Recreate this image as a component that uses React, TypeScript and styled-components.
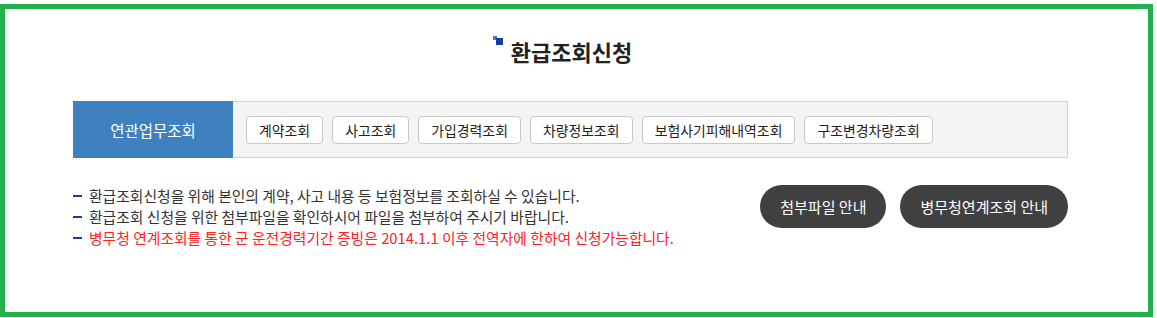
import React from "react";
import styled, { createGlobalStyle } from "styled-components";

const GlobalStyle = createGlobalStyle`
  body {
    margin: 0;
    background: #ffffff;
    font-family: "Noto Sans CJK KR", "Noto Sans", sans-serif;
  }
`;

const Frame = styled.div`
  margin-top: 4px;
  width: 1153px;
  height: 313px;
  box-sizing: border-box;
  border: 5px solid #22b14c;
`;

const Content = styled.div`
  width: 995px;
  margin-left: 68px;
`;

const Title = styled.h2`
  margin: 0;
  padding-top: 27px;
  height: 92px;
  box-sizing: border-box;
  display: flex;
  justify-content: center;
  align-items: flex-start;
  gap: 8px;
  font-size: 22px;
  font-weight: 700;
  color: #222;
  line-height: 30px;
  padding-right: 16px;
`;

const TitleMark = styled.span`
  position: relative;
  width: 10px;
  height: 10px;
  &::before {
    content: "";
    position: absolute;
    left: 0;
    top: 0;
    width: 4px;
    height: 4px;
    background: #3b78d8;
  }
  &::after {
    content: "";
    position: absolute;
    left: 3px;
    top: 2px;
    width: 7px;
    height: 7px;
    background: #103f9c;
  }
`;

const MenuBar = styled.div`
  display: flex;
  height: 57px;
  box-sizing: border-box;
  border: 1px solid #d2d2d2;
  background: #f4f4f4;
`;

const MenuLabel = styled.div`
  width: 160px;
  margin: -1px 0 -1px -1px;
  background: #3f80c0;
  color: #fff;
  font-size: 15.5px;
  display: flex;
  align-items: center;
  justify-content: center;
`;

const MenuList = styled.div`
  display: flex;
  align-items: center;
  gap: 9px;
  padding-left: 13px;
`;

const MenuButton = styled.button`
  height: 28px;
  padding: 0 12px;
  border: 1px solid #c8c8c8;
  border-radius: 4px;
  background: #fff;
  color: #222;
  font-family: inherit;
  font-size: 13.9px;
`;

const InfoRow = styled.div`
  display: flex;
  justify-content: space-between;
  padding-top: 27px;
`;

const Notes = styled.ul`
  margin: 0;
  padding: 0;
  list-style: none;
  font-size: 14.8px;
  line-height: 21px;
`;

const Note = styled.li<{ warn?: boolean }>`
  color: ${(p) => (p.warn ? "#ff2222" : "#333")};
  padding-left: 16px;
  position: relative;
  &::before {
    content: "";
    position: absolute;
    left: 0;
    top: 10px;
    width: 9px;
    height: 2px;
    background: #1c3f94;
  }
`;

const GuideButtons = styled.div`
  display: flex;
  gap: 14px;
`;

const GuideButton = styled.button`
  height: 43px;
  padding: 0 20px;
  border: none;
  border-radius: 22px;
  background: #404040;
  color: #fff;
  font-family: inherit;
  font-size: 15px;
`;

const menus = [
  "계약조회",
  "사고조회",
  "가입경력조회",
  "차량정보조회",
  "보험사기피해내역조회",
  "구조변경차량조회",
];

const App: React.FC = () => {
  return (
    <>
      <GlobalStyle />
      <Frame>
        <Content>
          <Title>
            <TitleMark />
            환급조회신청
          </Title>
          <MenuBar>
            <MenuLabel>연관업무조회</MenuLabel>
            <MenuList>
              {menus.map((m) => (
                <MenuButton key={m}>{m}</MenuButton>
              ))}
            </MenuList>
          </MenuBar>
          <InfoRow>
            <Notes>
              <Note>환급조회신청을 위해 본인의 계약, 사고 내용 등 보험정보를 조회하실 수 있습니다.</Note>
              <Note>환급조회 신청을 위한 첨부파일을 확인하시어 파일을 첨부하여 주시기 바랍니다.</Note>
              <Note warn>
                병무청 연계조회를 통한 군 운전경력기간 증빙은 2014.1.1 이후 전역자에 한하여 신청가능합니다.
              </Note>
            </Notes>
            <GuideButtons>
              <GuideButton>첨부파일 안내</GuideButton>
              <GuideButton>병무청연계조회 안내</GuideButton>
            </GuideButtons>
          </InfoRow>
        </Content>
      </Frame>
    </>
  );
};

export default App;
